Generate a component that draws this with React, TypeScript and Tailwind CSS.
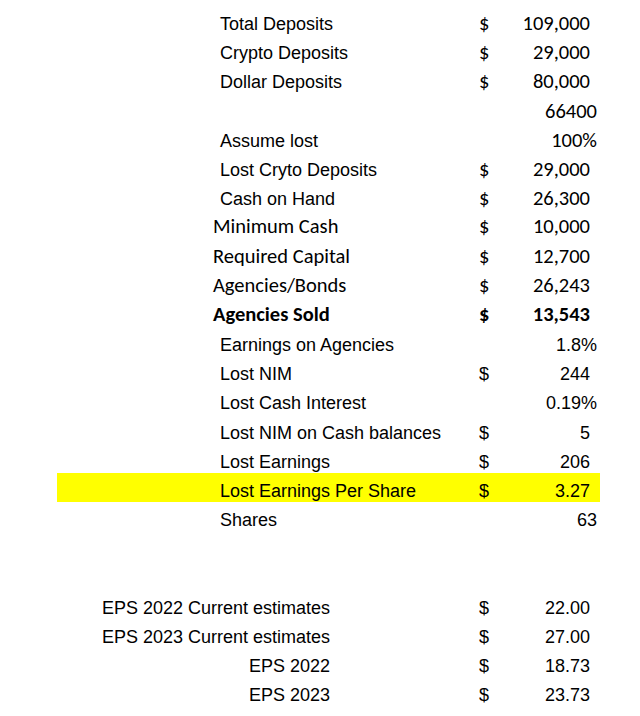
import React from 'react'

type Row = {
  label?: string
  dollar?: boolean
  value?: string
  kind?: 'arial' | 'calibri' | 'eps'
  labelFont?: 'arial' | 'calibri'
  numFont?: 'arial' | 'calibri'
  bold?: boolean
  plain?: boolean
  highlight?: boolean
  rightLabel?: boolean
}

const arial = "font-['Liberation_Sans',Arial,sans-serif] text-[18px] leading-[20px]"
const calibri = "font-['Carlito',Lato,sans-serif] text-[20.5px] leading-[16px]"

const rows: Row[] = [
  { label: 'Total Deposits', dollar: true, value: '109,000' },
  { label: 'Crypto Deposits', dollar: true, value: '29,000' },
  { label: 'Dollar Deposits', dollar: true, value: '80,000' },
  { value: '66400', plain: true },
  { label: 'Assume lost', value: '100%', plain: true },
  { label: 'Lost Cryto Deposits', dollar: true, value: '29,000' },
  { label: 'Cash on Hand', dollar: true, value: '26,300' },
  { label: 'Minimum Cash', labelFont: 'calibri', dollar: true, value: '10,000' },
  { label: 'Required Capital', labelFont: 'calibri', dollar: true, value: '12,700' },
  { label: 'Agencies/Bonds', labelFont: 'calibri', dollar: true, value: '26,243' },
  { label: 'Agencies Sold', labelFont: 'calibri', dollar: true, value: '13,543', bold: true },
  { label: 'Earnings on Agencies', numFont: 'arial', value: '1.8%', plain: true },
  { label: 'Lost NIM', numFont: 'arial', dollar: true, value: '244' },
  { label: 'Lost Cash Interest', numFont: 'arial', value: '0.19%', plain: true },
  { label: 'Lost NIM on Cash balances', numFont: 'arial', dollar: true, value: '5' },
  { label: 'Lost Earnings', numFont: 'arial', dollar: true, value: '206' },
  { label: 'Lost Earnings Per Share', numFont: 'arial', dollar: true, value: '3.27', highlight: true },
  { label: 'Shares', numFont: 'arial', value: '63', plain: true },
  {},
  {},
  { label: 'EPS 2022 Current estimates', kind: 'eps', numFont: 'arial', dollar: true, value: '22.00' },
  { label: 'EPS 2023 Current estimates', kind: 'eps', numFont: 'arial', dollar: true, value: '27.00' },
  { label: 'EPS 2022', kind: 'eps', rightLabel: true, numFont: 'arial', dollar: true, value: '18.73' },
  { label: 'EPS 2023', kind: 'eps', rightLabel: true, numFont: 'arial', dollar: true, value: '23.73' },
]

function SheetRow({ row }: { row: Row }) {
  const labelCls = row.labelFont === 'calibri' ? calibri : arial
  const numCls = row.numFont === 'arial' ? arial : calibri
  const weight = row.bold ? 'font-bold' : 'font-normal'

  return (
    <div
      className={`ml-[57px] flex h-[29.2px] w-[543px] items-baseline pt-[8px] text-black ${
        row.highlight ? 'bg-[#ffff00]' : ''
      }`}
    >
      {row.kind === 'eps' ? (
        <div className={`w-[413px] ${arial}`}>
          <div className={`w-[273px] whitespace-nowrap ${row.rightLabel ? 'text-right' : 'pl-[45px]'}`}>
            {row.label}
          </div>
        </div>
      ) : (
        <div
          className={`w-[413px] whitespace-nowrap ${labelCls} ${weight} ${
            row.labelFont === 'calibri' ? 'pl-[156px]' : 'pl-[163px]'
          }`}
        >
          {row.label ?? '\u00a0'}
        </div>
      )}
      <div className={`w-[30px] pl-[9px] ${numCls} ${weight}`}>{row.dollar ? '$' : '\u00a0'}</div>
      <div
        className={`flex-1 text-right whitespace-nowrap ${numCls} ${weight} ${
          row.plain ? 'pr-[3px]' : 'pr-[10px]'
        }`}
      >
        {row.value ?? '\u00a0'}
      </div>
    </div>
  )
}

export default function App() {
  return (
    <div className="h-[716px] w-[640px] overflow-hidden bg-white pt-[6px]">
      {rows.map((row, i) => (
        <SheetRow key={i} row={row} />
      ))}
    </div>
  )
}
